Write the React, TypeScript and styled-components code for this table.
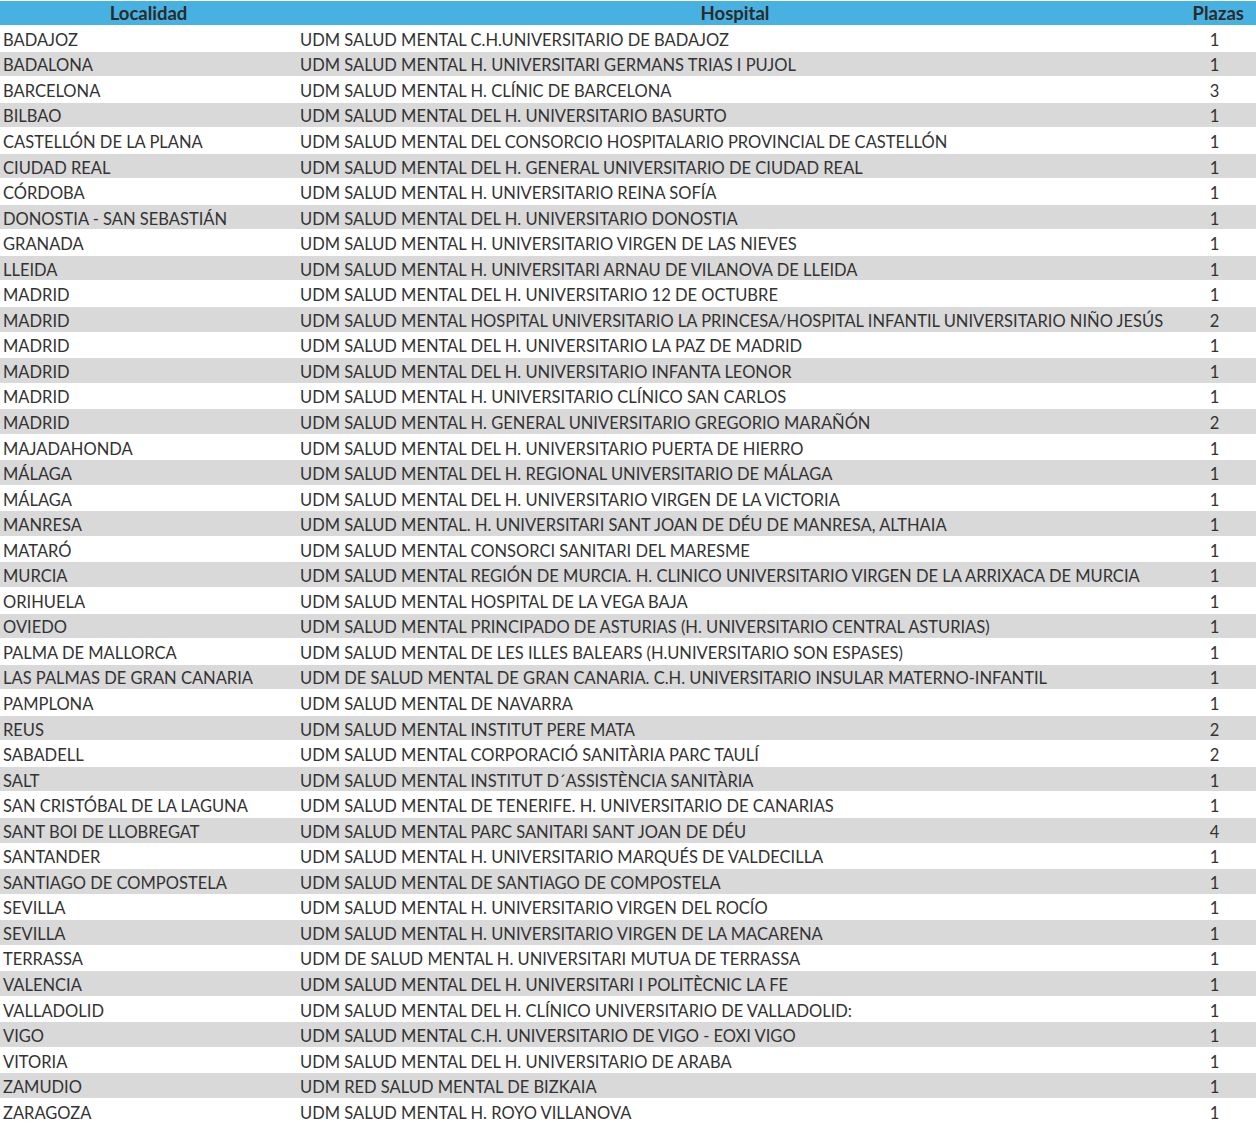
import React from "react";
import styled, { createGlobalStyle } from "styled-components";

const Global = createGlobalStyle`
  html, body { margin: 0; padding: 0; background: #ffffff; }
  body { font-family: "Lato", "Liberation Sans", sans-serif; }
`;

const Table = styled.div`
  width: 1256px;
  display: flex;
  flex-direction: column;
  gap: 1px;
  padding-top: 1px;
  font-family: "Lato", "Liberation Sans", sans-serif;
  color: #333333;
`;

const HeadRow = styled.div`
  display: grid;
  grid-template-columns: 297px 1fr 83px;
  height: 24px;
  background: #47b2e2;
  font-size: 18.5px;
  font-weight: 700;
  line-height: 24px;
  color: #2b2b2b;
`;

const HeadCell = styled.div<{ $align?: string; $pr?: number }>`
  text-align: ${(p) => p.$align || "center"};
  padding-right: ${(p) => p.$pr ?? 0}px;
`;

const Row = styled.div<{ $alt: boolean }>`
  display: grid;
  grid-template-columns: 297px 1fr 83px;
  height: 24.55px;
  align-items: center;
  background: ${(p) => (p.$alt ? "#d9d9d9" : "#ffffff")};
  font-size: 16.5px;
  line-height: 20px;
`;

const Cell = styled.div<{ $center?: boolean }>`
  padding: 3px 3px 0;
  white-space: nowrap;
  text-align: ${(p) => (p.$center ? "center" : "left")};
`;

const data: [string, string, number][] = [
  ["BADAJOZ", "UDM SALUD MENTAL C.H.UNIVERSITARIO DE BADAJOZ", 1],
  ["BADALONA", "UDM SALUD MENTAL H. UNIVERSITARI GERMANS TRIAS I PUJOL", 1],
  ["BARCELONA", "UDM SALUD MENTAL H. CLÍNIC DE BARCELONA", 3],
  ["BILBAO", "UDM SALUD MENTAL DEL H. UNIVERSITARIO BASURTO", 1],
  ["CASTELLÓN DE LA PLANA", "UDM SALUD MENTAL DEL CONSORCIO HOSPITALARIO PROVINCIAL DE CASTELLÓN", 1],
  ["CIUDAD REAL", "UDM SALUD MENTAL DEL H. GENERAL UNIVERSITARIO DE CIUDAD REAL", 1],
  ["CÓRDOBA", "UDM SALUD MENTAL H. UNIVERSITARIO REINA SOFÍA", 1],
  ["DONOSTIA - SAN SEBASTIÁN", "UDM SALUD MENTAL DEL H. UNIVERSITARIO DONOSTIA", 1],
  ["GRANADA", "UDM SALUD MENTAL H. UNIVERSITARIO VIRGEN DE LAS NIEVES", 1],
  ["LLEIDA", "UDM SALUD MENTAL H. UNIVERSITARI ARNAU DE VILANOVA DE LLEIDA", 1],
  ["MADRID", "UDM SALUD MENTAL DEL H. UNIVERSITARIO 12 DE OCTUBRE", 1],
  ["MADRID", "UDM SALUD MENTAL HOSPITAL UNIVERSITARIO LA PRINCESA/HOSPITAL INFANTIL UNIVERSITARIO NIÑO JESÚS", 2],
  ["MADRID", "UDM SALUD MENTAL DEL H. UNIVERSITARIO LA PAZ DE MADRID", 1],
  ["MADRID", "UDM SALUD MENTAL DEL H. UNIVERSITARIO INFANTA LEONOR", 1],
  ["MADRID", "UDM SALUD MENTAL H. UNIVERSITARIO CLÍNICO SAN CARLOS", 1],
  ["MADRID", "UDM SALUD MENTAL H. GENERAL UNIVERSITARIO GREGORIO MARAÑÓN", 2],
  ["MAJADAHONDA", "UDM SALUD MENTAL DEL H. UNIVERSITARIO PUERTA DE HIERRO", 1],
  ["MÁLAGA", "UDM SALUD MENTAL DEL H. REGIONAL UNIVERSITARIO DE MÁLAGA", 1],
  ["MÁLAGA", "UDM SALUD MENTAL DEL H. UNIVERSITARIO VIRGEN DE LA VICTORIA", 1],
  ["MANRESA", "UDM SALUD MENTAL. H. UNIVERSITARI SANT JOAN DE DÉU DE MANRESA, ALTHAIA", 1],
  ["MATARÓ", "UDM SALUD MENTAL CONSORCI SANITARI DEL MARESME", 1],
  ["MURCIA", "UDM SALUD MENTAL REGIÓN DE MURCIA. H. CLINICO UNIVERSITARIO VIRGEN DE LA ARRIXACA DE MURCIA", 1],
  ["ORIHUELA", "UDM SALUD MENTAL HOSPITAL DE LA VEGA BAJA", 1],
  ["OVIEDO", "UDM SALUD MENTAL PRINCIPADO DE ASTURIAS (H. UNIVERSITARIO CENTRAL ASTURIAS)", 1],
  ["PALMA DE MALLORCA", "UDM SALUD MENTAL DE LES ILLES BALEARS (H.UNIVERSITARIO SON ESPASES)", 1],
  ["LAS PALMAS DE GRAN CANARIA", "UDM DE SALUD MENTAL DE GRAN CANARIA. C.H. UNIVERSITARIO INSULAR MATERNO-INFANTIL", 1],
  ["PAMPLONA", "UDM SALUD MENTAL DE NAVARRA", 1],
  ["REUS", "UDM SALUD MENTAL INSTITUT PERE MATA", 2],
  ["SABADELL", "UDM SALUD MENTAL CORPORACIÓ SANITÀRIA PARC TAULÍ", 2],
  ["SALT", "UDM SALUD MENTAL INSTITUT D´ASSISTÈNCIA SANITÀRIA", 1],
  ["SAN CRISTÓBAL DE LA LAGUNA", "UDM SALUD MENTAL DE TENERIFE. H. UNIVERSITARIO DE CANARIAS", 1],
  ["SANT BOI DE LLOBREGAT", "UDM SALUD MENTAL PARC SANITARI SANT JOAN DE DÉU", 4],
  ["SANTANDER", "UDM SALUD MENTAL H. UNIVERSITARIO MARQUÉS DE VALDECILLA", 1],
  ["SANTIAGO DE COMPOSTELA", "UDM SALUD MENTAL DE SANTIAGO DE COMPOSTELA", 1],
  ["SEVILLA", "UDM SALUD MENTAL H. UNIVERSITARIO VIRGEN DEL ROCÍO", 1],
  ["SEVILLA", "UDM SALUD MENTAL H. UNIVERSITARIO VIRGEN DE LA MACARENA", 1],
  ["TERRASSA", "UDM DE SALUD MENTAL H. UNIVERSITARI MUTUA DE TERRASSA", 1],
  ["VALENCIA", "UDM SALUD MENTAL DEL H. UNIVERSITARI I POLITÈCNIC LA FE", 1],
  ["VALLADOLID", "UDM SALUD MENTAL DEL H. CLÍNICO UNIVERSITARIO DE VALLADOLID:", 1],
  ["VIGO", "UDM SALUD MENTAL C.H. UNIVERSITARIO DE VIGO - EOXI VIGO", 1],
  ["VITORIA", "UDM SALUD MENTAL DEL H. UNIVERSITARIO DE ARABA", 1],
  ["ZAMUDIO", "UDM RED SALUD MENTAL DE BIZKAIA", 1],
  ["ZARAGOZA", "UDM SALUD MENTAL H. ROYO VILLANOVA", 1],
];

export default function App() {
  return (
    <>
      <Global />
      <Table>
        <HeadRow>
          <HeadCell>Localidad</HeadCell>
          <HeadCell>Hospital</HeadCell>
          <HeadCell $align="right" $pr={12}>Plazas</HeadCell>
        </HeadRow>
        {data.map(([loc, hosp, n], i) => (
          <Row key={i} $alt={i % 2 === 1}>
            <Cell>{loc}</Cell>
            <Cell>{hosp}</Cell>
            <Cell $center>{n}</Cell>
          </Row>
        ))}
      </Table>
    </>
  );
}
